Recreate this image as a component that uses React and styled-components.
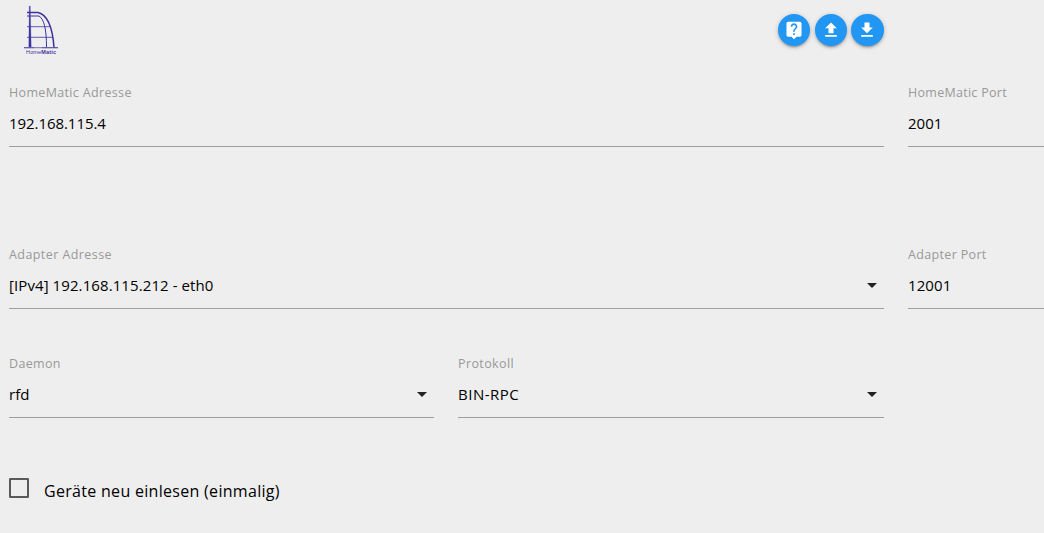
import styled, { createGlobalStyle } from "styled-components";

const GlobalStyle = createGlobalStyle`
    * {
        box-sizing: border-box;
    }
    body {
        margin: 0;
        background-color: #eeeeee;
        overflow: hidden;
        font-family: "Open Sans", "Noto Sans", sans-serif;
    }
`
const Page = styled.div`
    height: 533px;
    padding: 0 0 0 9px;
    overflow: hidden;
`
const Header = styled.div`
    width: 875px;
    height: 77px;
    display: flex;
    justify-content: space-between;
    align-items: flex-start;
`
const Logo = styled.svg`
    width: 40px;
    height: 52px;
    margin: 4px 0 0 12px;
`
const Buttons = styled.div`
    display: flex;
    gap: 4.2px;
    margin: 14px 0.4px 0 0;
`
const RoundButton = styled.button`
    width: 32.4px;
    height: 32.4px;
    padding: 0;
    border: none;
    border-radius: 50%;
    background-color: #2196f3;
    display: flex;
    justify-content: center;
    align-items: center;
    cursor: pointer;
    box-shadow: 0 2px 2px 0 rgba(0, 0, 0, 0.14), 0 3px 1px -2px rgba(0, 0, 0, 0.12), 0 1px 5px 0 rgba(0, 0, 0, 0.2);
`
const Icon = styled.svg`
    width: 20px;
    height: 20px;
    fill: white;
`
const Row = styled.div`
    display: grid;
    grid-template-columns: ${props => props.$columns};
    column-gap: 24px;
    width: max-content;
    margin-bottom: ${props => props.$space || 0}px;
`
const Field = styled.div`
    height: 70px;
    border-bottom: 1px solid #9e9e9e;
    display: flex;
    flex-direction: column;
`
const Label = styled.label`
    height: 31px;
    line-height: 32px;
    font-size: 12.5px;
    letter-spacing: ${props => props.$spacing || 0}px;
    color: #999999;
    white-space: nowrap;
`
const Value = styled.div`
    height: 30px;
    line-height: 30px;
    font-size: 15px;
    letter-spacing: ${props => props.$spacing || 0}px;
    color: black;
    display: flex;
    justify-content: space-between;
    align-items: center;
    white-space: nowrap;
`
const Caret = styled.svg`
    width: 10px;
    height: 5px;
    margin-right: 7px;
    fill: #212121;
`
const CheckRow = styled.label`
    display: flex;
    align-items: center;
    height: 26px;
    margin-top: 60px;
`
const Box = styled.span`
    width: 20px;
    height: 20px;
    margin-top: -6px;
    border: 2px solid #5a5a5a;
    border-radius: 1px;
`
const CheckText = styled.span`
    margin-left: 15px;
    font-size: 16px;
    letter-spacing: 0.3px;
    color: black;
    white-space: nowrap;
`

const InputField = ({ label, value, select, labelSpacing = 0.34, valueSpacing }) => (
    <Field>
        <Label $spacing={labelSpacing}>{label}</Label>
        <Value $spacing={valueSpacing}>
            <span>{value}</span>
            {select && <Caret viewBox="0 0 10 5"><path d="M0 0h10L5 5z" /></Caret>}
        </Value>
    </Field>
)

const HomeMaticLogo = () => (
    <Logo viewBox="0 0 40 52" fill="none" stroke="#3d33a0">
        <path d="M8.300 2h.9l1 41h-2.400z" fill="#3d33a0" strokeWidth="0.300" />
        <path d="M6 8.500h11c9 2 14.500 14 16 35" strokeWidth="1.500" />
        <path d="M6 12h12c5 3 7.500 13 7.500 31" strokeWidth="1" />
        <path d="M6 22.700h23M6 33.300h26" strokeWidth="0.800" />
        <path d="M3 43.700h10M21 43.700h16" strokeWidth="1.100" />
        <path d="M13 43.700h8" strokeWidth="0.700" />
        <text x="5" y="50" fontFamily="Liberation Sans, sans-serif" fontSize="5.500" textLength="30" fill="#3d33a0" stroke="none">
            Home<tspan fontWeight="bold">Matic</tspan>
        </text>
    </Logo>
)

const App = () => {
    return (
        <Page>
            <GlobalStyle />
            <Header>
                <HomeMaticLogo />
                <Buttons>
                    <RoundButton>
                        <Icon viewBox="0 0 24 24">
                            <path d="M19 2H5c-1.110 0-2 .9-2 2v14c0 1.100.89 2 2 2h4l3 3 3-3h4c1.100 0 2-.9 2-2V4c0-1.100-.9-2-2-2zm-6 16h-2v-2h2v2zm2.070-7.750l-.9.920C13.450 11.900 13 12.500 13 14h-2v-.5c0-1.100.45-2.100 1.170-2.830l1.240-1.260c.37-.36.590-.86.590-1.410 0-1.100-.9-2-2-2s-2 .9-2 2H8c0-2.210 1.790-4 4-4s4 1.790 4 4c0 .88-.36 1.680-.93 2.250z" />
                        </Icon>
                    </RoundButton>
                    <RoundButton>
                        <Icon viewBox="0 0 24 24">
                            <path d="M5 20h14v-2H5v2zM5 10h4v6h6v-6h4l-7-7-7 7z" />
                        </Icon>
                    </RoundButton>
                    <RoundButton>
                        <Icon viewBox="0 0 24 24">
                            <path d="M19 9h-4V3H9v6H5l7 7 7-7zM5 18v2h14v-2H5z" />
                        </Icon>
                    </RoundButton>
                </Buttons>
            </Header>

            <Row $columns="875px 425px" $space={92}>
                <InputField label="HomeMatic Adresse" value="192.168.115.4" valueSpacing={-0.06} />
                <InputField label="HomeMatic Port" value="2001" labelSpacing={0.28} />
            </Row>
            <Row $columns="875px 425px" $space={39}>
                <InputField label="Adapter Adresse" value="[IPv4] 192.168.115.212 - eth0" select labelSpacing={0.43} valueSpacing={0.09} />
                <InputField label="Adapter Port" value="12001" valueSpacing={0.1} />
            </Row>
            <Row $columns="425px 426px">
                <InputField label="Daemon" value="rfd" select />
                <InputField label="Protokoll" value="BIN-RPC" select labelSpacing={0.4} valueSpacing={0.5} />
            </Row>

            <CheckRow>
                <Box />
                <CheckText>Geräte neu einlesen (einmalig)</CheckText>
            </CheckRow>
        </Page>
    );
}
export default App;
